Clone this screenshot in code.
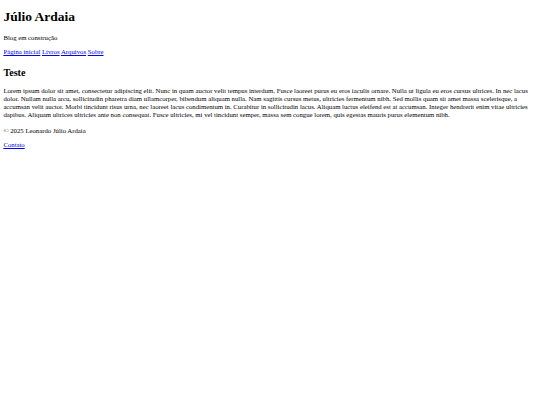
const NAV_LINKS = ["Página inicial", "Livros", "Arquivos", "Sobre"];

const LOREM =
  "Lorem ipsum dolor sit amet, consectetur adipiscing elit. Nunc in quam auctor velit tempus interdum. Fusce laoreet purus eu eros iaculis ornare. Nulla ut ligula eu eros cursus ultrices. In nec lacus dolor. Nullam nulla arcu, sollicitudin pharetra diam ullamcorper, bibendum aliquam nulla. Nam sagittis cursus metus, ultricies fermentum nibh. Sed mollis quam sit amet massa scelerisque, a accumsan velit auctor. Morbi tincidunt risus urna, nec laoreet lacus condimentum in. Curabitur in sollicitudin lacus. Aliquam luctus eleifend est at accumsan. Integer hendrerit enim vitae ultricies dapibus. Aliquam ultrices ultricies ante non consequat. Fusce ultricies, mi vel tincidunt semper, massa sem congue lorem, quis egestas mauris purus elementum nibh.";

export default function App() {
  return (
    <div className="w-[540px] px-[3.375px] font-['Liberation_Serif',serif] text-black">
      <header>
        <h1 className="my-[9.05px] text-[13.5px] leading-[1.15] font-bold">Júlio Ardaia</h1>
        <p className="my-[6.75px] text-[6.75px] leading-[1.15]">Blog em construção</p>
        <nav className="my-[6.75px] text-[6.75px] leading-[1.15]">
          {NAV_LINKS.map((label, i) => (
            <span key={label}>
              <a href="#" className="text-[#0000ee] underline">
                {label}
              </a>
              {i < NAV_LINKS.length - 1 ? " " : null}
            </span>
          ))}
        </nav>
      </header>
      <main>
        <h2 className="mt-[11.4px] mb-[8.4px] text-[10.125px] leading-[1.15] font-bold">Teste</h2>
        <p className="my-[8.4px] text-[6.75px] leading-[1.15]">{LOREM}</p>
      </main>
      <footer className="text-[6.75px] leading-[1.15]">
        <p className="my-[6.75px]">© 2025 Leonardo Júlio Ardaia</p>
        <p className="my-[6.75px]">
          <a href="#" className="text-[#0000ee] underline">
            Contato
          </a>
        </p>
      </footer>
    </div>
  );
}
